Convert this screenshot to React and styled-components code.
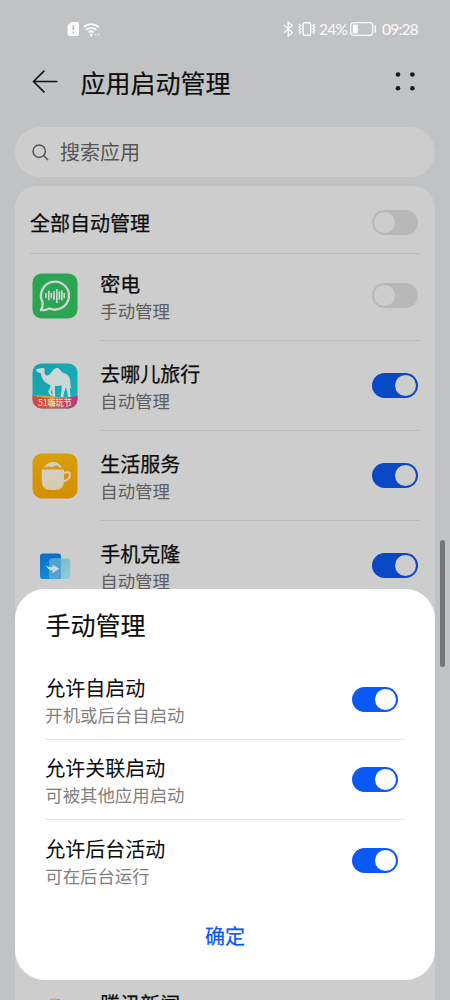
import React from "react";
import styled, { createGlobalStyle } from "styled-components";

const GlobalStyle = createGlobalStyle`
  *, *::before, *::after { box-sizing: border-box; }
  html, body { margin: 0; padding: 0; overflow: hidden; background: #c1c2c4; }
`;

const Screen = styled.div`
  position: relative;
  display: flex;
  flex-direction: column;
  width: 450px;
  height: 1000px;
  overflow: hidden;
  background: #c1c2c4;
  color: #0c0c0d;
  font-family: "Noto Sans CJK SC", sans-serif;
`;

const StatusBar = styled.div`
  flex: none;
  display: flex;
  justify-content: space-between;
  align-items: center;
  height: 58px;
  padding: 0 31px 0 67px;
  color: #fafafa;
`;

const StatusGroup = styled.div`
  display: flex;
  align-items: center;
`;

const StatusIcon = styled.svg`
  display: block;
  flex: none;
  margin-right: ${(p) => p.$gap || 0}px;
`;

const StatusText = styled.span`
  width: ${(p) => p.$width}px;
  font: 400 15.5px/20px Lato, sans-serif;
  letter-spacing: -0.8px;
  white-space: nowrap;
`;

const Header = styled.header`
  flex: none;
  display: flex;
  align-items: center;
  height: 48px;
  padding: 0 35px 0 32px;
`;

const Heading = styled.h1`
  flex: 1;
  margin: 0 0 0 22.5px;
  font-size: 25px;
  line-height: 36px;
  font-weight: 400;
  -webkit-text-stroke: 0.2px currentColor;
`;

const SearchBox = styled.div`
  flex: none;
  display: flex;
  align-items: center;
  gap: 11px;
  height: 50px;
  margin: 21px 15px 0;
  padding: 0 17px;
  border-radius: 25px;
  background: #cdcdcd;
  color: #555657;
  font-size: 20px;
  line-height: 30px;
`;

const Card = styled.section`
  flex: none;
  display: flex;
  flex-direction: column;
  margin: 9px 15px 0;
  padding: 0 15px;
  border-radius: 22px 22px 0 0;
  background: #cdcdcd;
`;

const AllRow = styled.div`
  display: flex;
  align-items: center;
  justify-content: space-between;
  height: 68px;
  padding: 6px 2px 0 0;
  border-bottom: 1px solid #bcbcbd;
`;

const AppRow = styled.div`
  display: flex;
  height: ${(p) => p.$height || 90}px;
`;

const IconCell = styled.div`
  flex: none;
  display: flex;
  align-items: center;
  width: 70px;
  padding: 0 0 ${(p) => p.$lift || 0}px 2px;
`;

const AppBody = styled.div`
  flex: 1;
  display: flex;
  align-items: center;
  justify-content: space-between;
  padding: 0 2px ${(p) => p.$lift || 0}px 0;
  border-bottom: 1px solid #bcbcbd;
`;

const Labels = styled.div`
  display: flex;
  flex-direction: column;
  padding: 2px 0 0 0.3px;
`;

const Name = styled.span`
  font-size: 20px;
  line-height: 28px;
  font-weight: 400;
  -webkit-text-stroke: ${(p) => (p.$bright ? 0.05 : 0.25)}px currentColor;
`;

const Note = styled.span`
  font-size: 17.4px;
  line-height: 25px;
  color: ${(p) => (p.$bright ? "#7f7f80" : "#5d5d5e")};
`;

const Track = styled.span`
  flex: none;
  display: flex;
  align-items: center;
  justify-content: ${(p) => (p.$on ? "flex-end" : "flex-start")};
  width: 46px;
  height: 25px;
  padding: 0 2.3px;
  border-radius: 13px;
  background: ${(p) => (p.$on ? (p.$bright ? "#0a59f7" : "#0848c6") : "#b8b8b8")};
`;

const Knob = styled.span`
  width: 21px;
  height: 21px;
  border-radius: 50%;
  background: ${(p) => (p.$bright ? "#fff" : "#cdcdcd")};
`;

const HiddenRows = styled.div`
  height: 360px;
`;

const ScrollThumb = styled.div`
  position: absolute;
  top: 540px;
  right: 5px;
  width: 5px;
  height: 127px;
  border-radius: 3px;
  background: #747577;
`;

const Dialog = styled.section`
  position: absolute;
  left: 15px;
  right: 15px;
  top: 589px;
  height: 391px;
  display: flex;
  flex-direction: column;
  padding: 17px 30px 0;
  border-radius: 30px;
  background: #fff;
`;

const DialogTitle = styled.h2`
  margin: 0 0 17.6px 0.5px;
  font-size: 25px;
  line-height: 36px;
  font-weight: 400;
  -webkit-text-stroke: 0.15px currentColor;
`;

const Option = styled.div`
  display: flex;
  align-items: center;
  justify-content: space-between;
  height: 80.4px;
  padding-right: 7px;
  border-bottom: ${(p) => (p.$last ? "0" : "1px solid #e3e3e4")};
`;

const Confirm = styled.button`
  align-self: center;
  margin-top: 19px;
  padding: 0;
  border: 0;
  background: none;
  color: #0a59f7;
  font: 400 20px/32px "Noto Sans CJK SC", sans-serif;
  -webkit-text-stroke: 0.25px currentColor;
`;

function Toggle({ on, bright }) {
  return (
    <Track $on={on} $bright={bright}>
      <Knob $bright={bright} />
    </Track>
  );
}

function ChatIcon() {
  return (
    <svg width="46" height="46" viewBox="0 0 46 46">
      <rect x="0.5" y="0.5" width="45" height="45" rx="9" fill="#2ba552" />
      <path
        d="M10.5 29A14 14 0 1 1 17.2 35.4C14.8 36.8 12 37.4 9 37.1C10.3 34.5 11.2 31.8 10.5 29Z"
        fill="none" stroke="#d0d4d1" strokeWidth="2.3" strokeLinejoin="round"
      />
      <path d="M14 20v5.2M16.8 17.7v9.6M19.4 20v5.2M22 18.3v8.4M24.8 16v14M27.4 18.6v7.8M29.8 17.5v9.8M32.2 20v5.2" stroke="#d0d4d1" strokeWidth="1.7" />
    </svg>
  );
}

const BannerText = styled.text`
  font: 500 9px "Noto Sans CJK SC", sans-serif;
  fill: #e4dcda;
`;

function CamelIcon() {
  return (
    <svg width="46" height="46" viewBox="0 0 46 46">
      <defs>
        <linearGradient id="sea" x1="0" y1="0" x2="1" y2="1">
          <stop offset="0" stopColor="#159fae" />
          <stop offset="1" stopColor="#18b3b8" />
        </linearGradient>
        <linearGradient id="banner">
          <stop offset="0" stopColor="#d64a38" />
          <stop offset="0.55" stopColor="#cf5548" />
          <stop offset="1" stopColor="#b43a83" />
        </linearGradient>
        <clipPath id="tile"><rect x="0.5" y="0.5" width="45" height="45" rx="9" /></clipPath>
      </defs>
      <g clipPath="url(#tile)">
        <rect width="46" height="46" fill="url(#sea)" />
        <path
          d="M4.3 6.2C6 5.4 8.5 5.5 10.5 5C12 4.7 13 6 12.6 8C12.4 10 12.8 11.2 14 12.2C15.8 13.2 17.2 11.8 18.4 10.6C20 9 21.2 6.8 23 5.6C24.6 4.7 26.6 5 27.8 6.4C29 7.8 29.8 9.2 31.8 10C35.4 10.8 37.6 13.6 38.2 17.5C38.6 20.5 38.4 23 39.4 25.8L38 24.8C37.8 27 38.2 30 38.6 34H35.8C35.6 29.5 34.8 27 33.8 24.2C33 27.5 31.6 29.6 31.4 34H28.7C29 29.5 30.2 26.5 29.4 22C27.5 23 25 23.2 22.8 22.9L23.2 34H20.5L20.2 26.6L18.6 28.8L20.4 32.6H18.2L16.2 28.8L18.4 24V22C14.3 21 11.2 17.8 9.8 14C9 12.2 9 10.8 8.5 9.8C7.1 9.7 5.4 9.3 4.6 8.4Z"
          fill="#cdd7d8"
        />
        <path d="M0 32.5C15 35 31 36.5 46 32.5V46H0Z" fill="url(#banner)" />
        <path d="M0 32.5C13 35.5 26 36.5 36 34.5C25 35 12 31.5 0 32.5Z" fill="#cda62d" />
        <path d="M18 36L22 37L20 45L17 42Z" fill="#d0a323" />
        <BannerText x="6.3" y="43.4" textLength="33.5" lengthAdjust="spacingAndGlyphs">51嗨玩节</BannerText>
      </g>
    </svg>
  );
}

function CupIcon() {
  return (
    <svg width="46" height="46" viewBox="0 0 46 46">
      <defs>
        <linearGradient id="amber" x1="0" y1="0" x2="0" y2="1">
          <stop offset="0" stopColor="#d99f08" />
          <stop offset="1" stopColor="#d58c05" />
        </linearGradient>
        <linearGradient id="cup" x1="0" y1="0" x2="0" y2="1">
          <stop offset="0" stopColor="#d0cfcb" />
          <stop offset="1" stopColor="#d8cba7" />
        </linearGradient>
      </defs>
      <rect x="0.5" y="0.5" width="45" height="45" rx="9" fill="url(#amber)" />
      <path d="M12.2 14.7A9.7 9.7 0 0 1 29.8 14.7C27.6 15 26.8 12.7 25 12.5C22.8 12.3 21.8 14.5 19.6 14C17 13.3 14.3 13.5 12.2 14.7Z" fill="#d0cfcb" />
      <path d="M9.8 16.5H32V27.5Q32 37 23 37H18.8Q9.8 37 9.8 27.5Z" fill="url(#cup)" />
      <path d="M31.8 20.7C34 18.5 37.7 18.7 38 21.5C38.2 24.7 35 27.4 31 28.6" fill="none" stroke="#d3ceb9" strokeWidth="2" />
    </svg>
  );
}

function CloneIcon() {
  return (
    <svg width="46" height="46" viewBox="0 0 46 46">
      <defs>
        <linearGradient id="back" x1="0" y1="0" x2="0" y2="1">
          <stop offset="0" stopColor="#086dcb" />
          <stop offset="1" stopColor="#168bd3" />
        </linearGradient>
        <linearGradient id="front" x1="0" y1="0" x2="1" y2="1">
          <stop offset="0" stopColor="#68b3cf" />
          <stop offset="1" stopColor="#95ccd3" />
        </linearGradient>
      </defs>
      <rect x="8" y="10.5" width="21" height="25.5" rx="3" fill="url(#back)" />
      <rect x="17.2" y="15.5" width="21" height="20.5" rx="3" fill="url(#front)" />
      <path d="M17.2 18.5Q17.2 15.5 20.2 15.5H29V36H20.2Q17.2 36 17.2 33Z" fill="#4da4d3" />
      <path d="M14 22C15.9 24.4 18.5 24.3 20.8 24L20.2 21.4L27.3 25.7L20.2 30.2L20.8 27.4C17.5 27.6 14.8 25.5 14 22Z" fill="#cfd9da" />
    </svg>
  );
}

function NewsIcon() {
  return (
    <svg width="46" height="46" viewBox="0 0 46 46">
      <circle cx="23" cy="19" r="13.2" fill="#2b72c4" />
      <path d="M17 7.2Q22.5 4.4 28 7.2L23 15Z" fill="#c9b265" />
    </svg>
  );
}

const apps = [
  { name: "密电", note: "手动管理", on: false, Icon: ChatIcon, height: 87, lift: 3 },
  { name: "去哪儿旅行", note: "自动管理", on: true, Icon: CamelIcon },
  { name: "生活服务", note: "自动管理", on: true, Icon: CupIcon },
  { name: "手机克隆", note: "自动管理", on: true, Icon: CloneIcon },
];

const options = [
  { name: "允许自启动", note: "开机或后台自启动" },
  { name: "允许关联启动", note: "可被其他应用启动" },
  { name: "允许后台活动", note: "可在后台运行" },
];

function AppItem({ name, note, on, Icon, height, lift }) {
  return (
    <AppRow $height={height}>
      <IconCell $lift={lift}><Icon /></IconCell>
      <AppBody $lift={lift}>
        <Labels>
          <Name>{name}</Name>
          <Note>{note}</Note>
        </Labels>
        <Toggle on={on} />
      </AppBody>
    </AppRow>
  );
}

export default function App() {
  return (
    <Screen>
      <GlobalStyle />
      <StatusBar>
        <StatusGroup>
          <StatusIcon $gap={4} width="12" height="14" viewBox="0 0 12 14">
            <path d="M4 0H10Q12 0 12 2V12Q12 14 10 14H2.5Q0.5 14 0.5 12V3.2Z" fill="currentColor" />
            <path d="M6.3 3.5V8M6.3 9.8V11.3" stroke="#b9babc" strokeWidth="1.6" />
          </StatusIcon>
          <StatusIcon width="18" height="15" viewBox="0 0 18 15">
            <path d="M0.8 5A11 11 0 0 1 15.6 5M3.2 7.8A7.4 7.4 0 0 1 13.2 7.8M5.6 10.4A4 4 0 0 1 10.8 10.4" fill="none" stroke="currentColor" strokeWidth="1.8" />
            <circle cx="8.2" cy="13" r="1.5" fill="currentColor" />
            <path d="M11.3 12.5L13.2 10.8V14.2ZM16.9 12.5L14.9 10.8V14.2Z" fill="#e2e2e3" />
          </StatusIcon>
        </StatusGroup>
        <StatusGroup>
          <StatusIcon $gap={4} width="11" height="16" viewBox="0 0 11 16">
            <path d="M1 4.2L9.3 11.6L5.2 15V1L9.3 4.4L1 11.8" fill="none" stroke="currentColor" strokeWidth="1.3" />
          </StatusIcon>
          <StatusIcon $gap={3} width="18" height="14" viewBox="0 0 18 14">
            <rect x="5.1" y="0.7" width="7.6" height="12.6" rx="1.8" fill="none" stroke="currentColor" strokeWidth="1.4" />
            <path d="M1 2L2.8 3.6L1 5.2L2.8 6.9L1 8.5L2.8 10.1L1 11.7M16.8 2L15 3.6L16.8 5.2L15 6.9L16.8 8.5L15 10.1L16.8 11.7" fill="none" stroke="currentColor" strokeWidth="1.3" />
          </StatusIcon>
          <StatusText $width={31}>24%</StatusText>
          <StatusIcon $gap={5} width="27" height="14" viewBox="0 0 27 14">
            <rect x="0.7" y="0.7" width="22" height="12.6" rx="3" fill="none" stroke="currentColor" strokeWidth="1.3" />
            <rect x="2.8" y="2.6" width="5" height="8.8" rx="1" fill="currentColor" />
            <path d="M25.3 4V10" stroke="currentColor" strokeWidth="1.4" strokeLinecap="round" />
          </StatusIcon>
          <StatusText $width={37}>09:28</StatusText>
        </StatusGroup>
      </StatusBar>

      <Header>
        <svg width="26" height="24" viewBox="0 0 26 24">
          <path d="M25.3 11.5H1.5M12.4 0.6L1.5 11.5L12.4 22.4" fill="none" stroke="#121213" strokeWidth="1.6" />
        </svg>
        <Heading>应用启动管理</Heading>
        <svg width="20" height="20" viewBox="0 0 20 20" fill="#1a1a1b">
          <circle cx="3" cy="2.5" r="2.3" /><circle cx="17.4" cy="2.5" r="2.3" />
          <circle cx="3" cy="16.3" r="2.3" /><circle cx="17.4" cy="16.3" r="2.3" />
        </svg>
      </Header>

      <SearchBox>
        <svg width="17" height="17" viewBox="0 0 17 17">
          <circle cx="7.2" cy="7.2" r="6.2" fill="none" stroke="currentColor" strokeWidth="1.5" />
          <path d="M11.8 11.8L16 16" stroke="currentColor" strokeWidth="1.5" />
        </svg>
        搜索应用
      </SearchBox>

      <Card>
        <AllRow>
          <Name>全部自动管理</Name>
          <Toggle on={false} />
        </AllRow>
        {apps.map((app) => <AppItem key={app.name} {...app} />)}
        <HiddenRows />
        <AppItem name="腾讯新闻" note="自动管理" on Icon={NewsIcon} />
      </Card>

      <ScrollThumb />

      <Dialog>
        <DialogTitle>手动管理</DialogTitle>
        {options.map((option, i) => (
          <Option key={option.name} $last={i === options.length - 1}>
            <Labels>
              <Name $bright>{option.name}</Name>
              <Note $bright>{option.note}</Note>
            </Labels>
            <Toggle on bright />
          </Option>
        ))}
        <Confirm>确定</Confirm>
      </Dialog>
    </Screen>
  );
}
